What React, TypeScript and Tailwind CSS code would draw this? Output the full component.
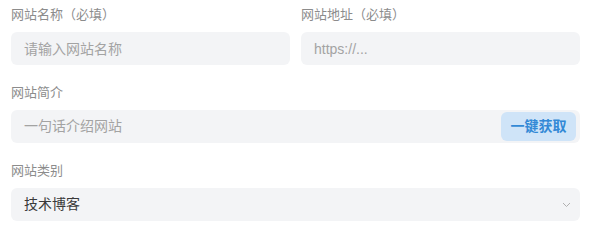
import React, { useState } from 'react';

const font = "font-['Liberation_Sans','Noto_Sans_CJK_SC',sans-serif]";

const Label: React.FC<{ children: React.ReactNode }> = ({ children }) => (
  <label className="block text-[13px] leading-5 text-[#8c8c8c] mb-[7px]">{children}</label>
);

const inputCls =
  'w-full h-[33px] rounded-md bg-[#f3f4f6] px-[13px] text-[14px] text-[#3a3a3a] placeholder:text-[#a3a3a3] outline-none';

export default function App() {
  const [category, setCategory] = useState('技术博客');

  return (
    <div className={`${font} bg-white w-[594px] h-[232px] pl-[11px] pr-[14px] pt-[5px]`}>
      <div className="grid grid-cols-2 gap-x-[11px]">
        <div>
          <Label>网站名称（必填）</Label>
          <input className={inputCls} placeholder="请输入网站名称" />
        </div>
        <div>
          <Label>网站地址（必填）</Label>
          <input className={inputCls} placeholder="https://..." />
        </div>
      </div>

      <div className="mt-[18px]">
        <Label>网站简介</Label>
        <div className="flex items-center h-[33px] rounded-md bg-[#f3f4f6] pl-[13px] pr-[4px]">
          <input
            className="flex-1 bg-transparent text-[14px] text-[#3a3a3a] placeholder:text-[#a3a3a3] outline-none"
            placeholder="一句话介绍网站"
          />
          <button className="h-[29px] w-[75px] rounded-md bg-[#cfe4f8] text-[14px] font-semibold text-[#3389d6]">
            一键获取
          </button>
        </div>
      </div>

      <div className="mt-[18px]">
        <Label>网站类别</Label>
        <div className="relative">
          <select
            value={category}
            onChange={(e) => setCategory(e.target.value)}
            className={`${inputCls} appearance-none pr-8`}
          >
            <option>技术博客</option>
            <option>设计资源</option>
            <option>开发工具</option>
          </select>
          <svg
            className="pointer-events-none absolute right-[9px] top-[14px] w-[9px] h-[6px]"
            viewBox="0 0 9 6"
            fill="none"
          >
            <path d="M1 1l3.5 3.5L8 1" stroke="#b0b0b0" strokeWidth="1" />
          </svg>
        </div>
      </div>
    </div>
  );
}
